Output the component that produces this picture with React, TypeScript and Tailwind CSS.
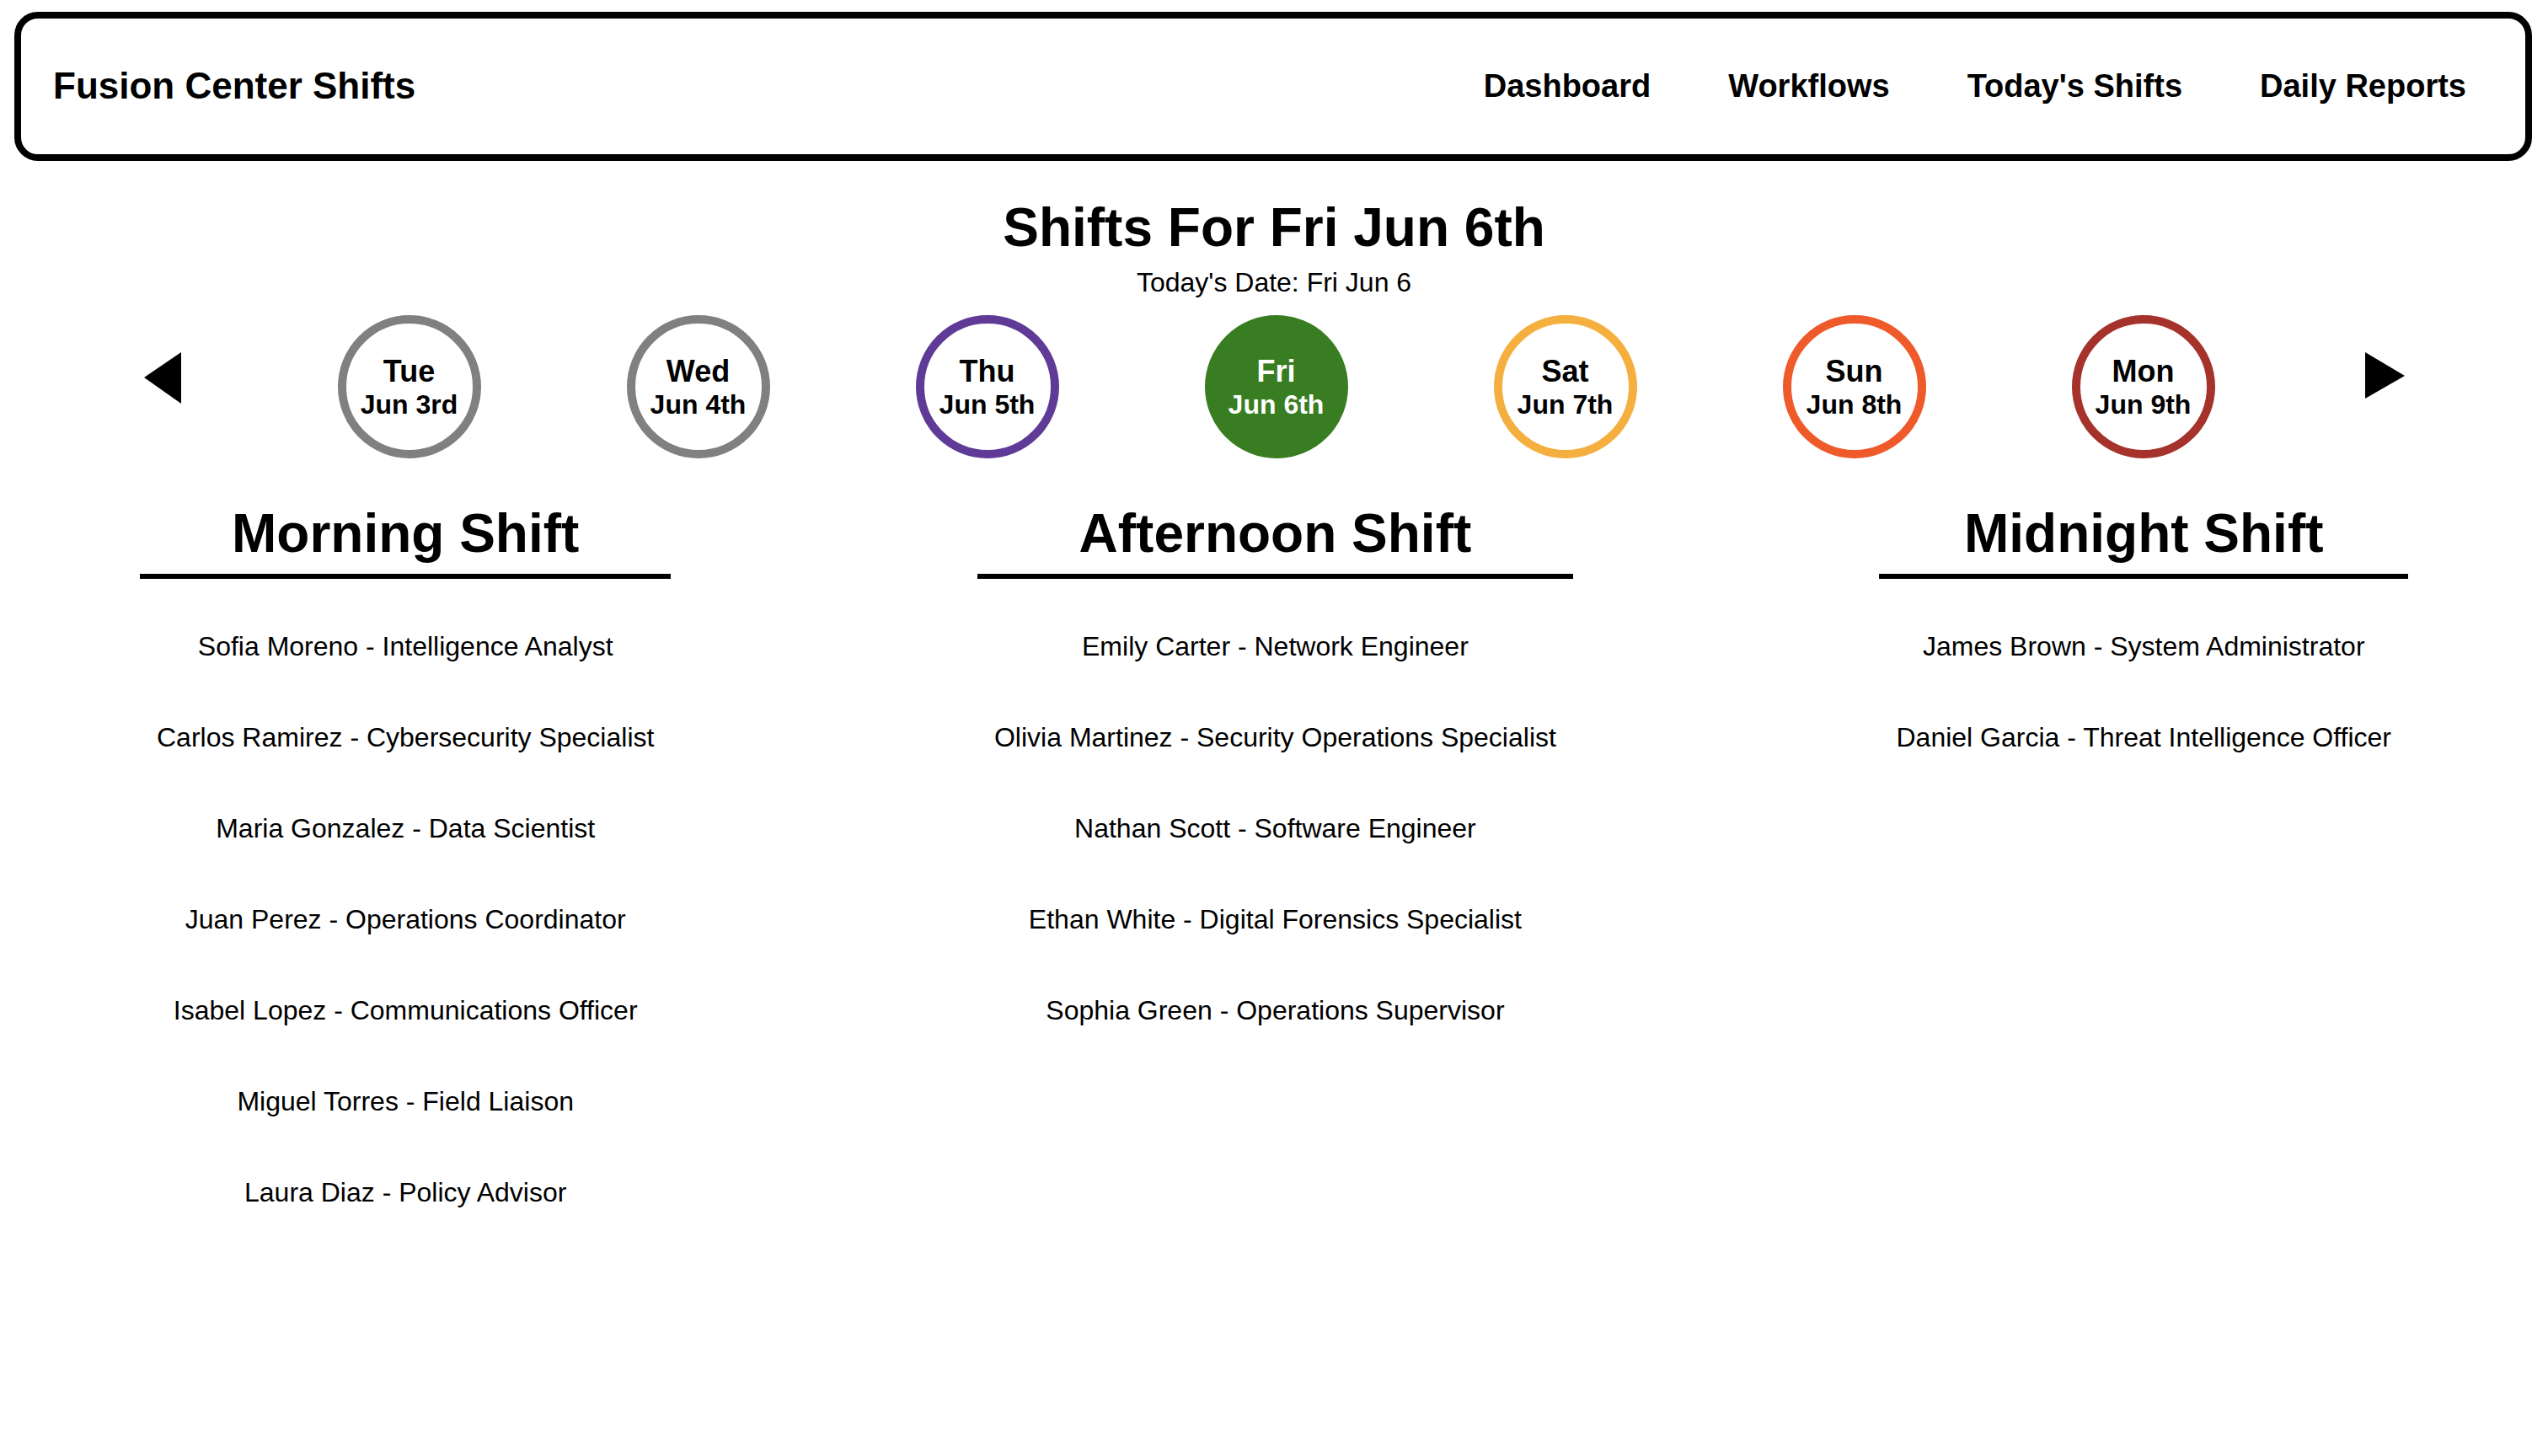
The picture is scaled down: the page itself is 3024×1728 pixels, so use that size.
import React from "react"

interface Day {
	dow: string
	date: string
	border: string
	filled?: boolean
}

const days: Day[] = [
	{ dow: "Tue", date: "Jun 3rd", border: "border-[#808080]" },
	{ dow: "Wed", date: "Jun 4th", border: "border-[#808080]" },
	{ dow: "Thu", date: "Jun 5th", border: "border-[#5f3a97]" },
	{ dow: "Fri", date: "Jun 6th", border: "border-[#387d22]", filled: true },
	{ dow: "Sat", date: "Jun 7th", border: "border-[#f4af3e]" },
	{ dow: "Sun", date: "Jun 8th", border: "border-[#ef5a2a]" },
	{ dow: "Mon", date: "Jun 9th", border: "border-[#a5322b]" }
]

const shifts = [
	{
		title: "Morning Shift",
		people: [
			"Sofia Moreno - Intelligence Analyst",
			"Carlos Ramirez - Cybersecurity Specialist",
			"Maria Gonzalez - Data Scientist",
			"Juan Perez - Operations Coordinator",
			"Isabel Lopez - Communications Officer",
			"Miguel Torres - Field Liaison",
			"Laura Diaz - Policy Advisor"
		]
	},
	{
		title: "Afternoon Shift",
		people: [
			"Emily Carter - Network Engineer",
			"Olivia Martinez - Security Operations Specialist",
			"Nathan Scott - Software Engineer",
			"Ethan White - Digital Forensics Specialist",
			"Sophia Green - Operations Supervisor"
		]
	},
	{
		title: "Midnight Shift",
		people: [
			"James Brown - System Administrator",
			"Daniel Garcia - Threat Intelligence Officer"
		]
	}
]

const navLinks = ["Dashboard", "Workflows", "Today's Shifts", "Daily Reports"]

function DayCircle({ day }: { day: Day }) {
	return (
		<div
			className={`w-[170px] h-[170px] rounded-full border-[10px] flex flex-col items-center justify-center font-bold ${day.border} ${
				day.filled ? "bg-[#387d22] text-white" : "bg-white text-black"
			}`}>
			<span className="text-[36px] leading-[1.15]">{day.dow}</span>
			<span className="text-[32px] leading-[1.15]">{day.date}</span>
		</div>
	)
}

function ShiftColumn({ title, people }: { title: string; people: string[] }) {
	return (
		<section className="flex flex-col w-fit">
			<h2 className="text-[64px] font-bold leading-[1.15] text-center pb-[10px] border-b-[6px] border-black">
				{title}
			</h2>
			<ul className="mt-[26px] px-5">
				{people.map((person, index) => (
					<li
						key={index}
						className="text-[32px] leading-[108px] text-center whitespace-nowrap">
						{person}
					</li>
				))}
			</ul>
		</section>
	)
}

export default function App() {
	return (
		<div className="min-h-screen bg-white text-black font-['Liberation_Sans',Arial,sans-serif]">
			<header className="ml-[17px] mr-[19px] mt-[14px] h-[177px] border-[8px] border-black rounded-[28px] flex items-center justify-between pl-[38px] pr-[70px]">
				<div className="text-[44px] font-bold leading-[1.15]">
					Fusion Center Shifts
				</div>
				<nav className="flex gap-[92px] text-[38px] font-bold leading-[1.15]">
					{navLinks.map(link => (
						<a key={link} href="#" className="text-black">
							{link}
						</a>
					))}
				</nav>
			</header>

			<h1 className="mt-[43px] text-[64px] font-bold leading-[1.15] text-center">
				Shifts For Fri Jun 6th
			</h1>
			<p className="mt-[9px] text-[32px] leading-[1.15] text-center">
				Today's Date: Fri Jun 6
			</p>

			<div className="mt-[21px] flex justify-center items-start">
				<button className="mt-[44px] mr-[186px]">
					<svg width="44" height="61" viewBox="0 0 44 61">
						<polygon points="44,0 44,61 0,30" fill="black" />
					</svg>
				</button>
				<div className="flex gap-[173px]">
					{days.map(day => (
						<DayCircle key={day.dow} day={day} />
					))}
				</div>
				<button className="mt-[44px] ml-[178px]">
					<svg width="47" height="55" viewBox="0 0 47 55">
						<polygon points="0,0 0,55 47,28" fill="black" />
					</svg>
				</button>
			</div>

			<main className="mt-[53px] px-[166px] flex justify-between items-start pb-20">
				{shifts.map(shift => (
					<ShiftColumn key={shift.title} title={shift.title} people={shift.people} />
				))}
			</main>
		</div>
	)
}
